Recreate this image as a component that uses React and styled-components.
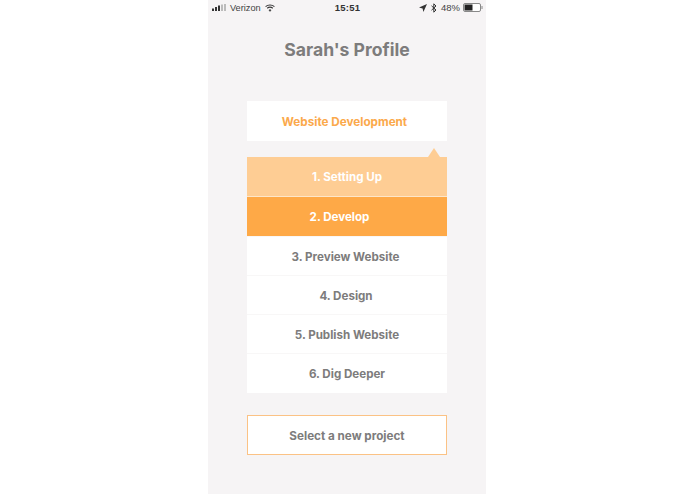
import React from 'react';
import styled, { createGlobalStyle } from 'styled-components';

const GlobalStyle = createGlobalStyle`
  html, body {
    margin: 0;
    padding: 0;
    background: #fff;
  }
  body {
    font-family: Inter, "Liberation Sans", sans-serif;
  }
`;

const Page = styled.div`
  width: 695px;
  height: 494px;
  padding-left: 208px;
  box-sizing: border-box;
  overflow: hidden;
`;

const Phone = styled.div`
  width: 278px;
  height: 494px;
  background: #f6f4f5;
  display: flex;
  flex-direction: column;
  align-items: center;
`;

const StatusBar = styled.div`
  width: 100%;
  box-sizing: border-box;
  height: 15px;
  padding: 0 3px 0 4px;
  display: grid;
  grid-template-columns: 1fr auto 1fr;
  align-items: center;
  font-family: "Liberation Sans", sans-serif;
  font-size: 9.5px;
  color: #444;
`;

const StatusLeft = styled.div`
  display: flex;
  align-items: center;
  gap: 4px;

  span {
    font-size: 9.2px;
  }
`;

const StatusRight = styled.div`
  display: flex;
  align-items: center;
  justify-content: flex-end;
  gap: 4px;

  span {
    margin-right: -1px;
  }
`;

const Clock = styled.div`
  font-weight: 700;
  font-size: 9.5px;
  letter-spacing: 0.2px;
  color: #333;
`;

const Title = styled.h1`
  margin: 25px 0 0;
  height: 20px;
  line-height: 20px;
  font-size: 17.6px;
  font-weight: 700;
  color: #7d7c7c;
`;

const ProjectCard = styled.div`
  margin-top: 41px;
  width: 200px;
  height: 40px;
  box-sizing: border-box;
  padding: 1px 5px 0 0;
  background: #fff;
  display: flex;
  align-items: center;
  justify-content: center;
  font-size: 11.7px;
  font-weight: 700;
  color: #fba94b;
`;

const Steps = styled.ul`
  position: relative;
  list-style: none;
  margin: 16px 0 0;
  padding: 0;
  width: 200px;
  background: #fff;

  &::before {
    content: '';
    position: absolute;
    top: -9px;
    right: 7px;
    border-left: 6px solid transparent;
    border-right: 6px solid transparent;
    border-bottom: 9px solid #fecd94;
  }
`;

const rowColors = {
  done: { bg: '#fecd94', line: '#fde6ca' },
  active: { bg: '#fea947', line: '#fea947' },
};

const Step = styled.li`
  box-sizing: border-box;
  height: ${(p) => (p.$state === 'done' ? 40 : 39)}px;
  padding-top: ${(p) => (p.$state === 'done' ? 1 : p.$state ? 2 : 1)}px;
  padding-right: ${(p) => p.$shift || 0}px;
  display: flex;
  align-items: center;
  justify-content: center;
  font-size: 11.6px;
  font-weight: 700;
  color: ${(p) => (p.$state ? '#fff' : '#7d7c7c')};
  background: ${(p) => (p.$state ? rowColors[p.$state].bg : '#fff')};
  border-bottom: ${(p) => (p.$state ? `1px solid ${rowColors[p.$state].line}` : '0')};
  border-top: ${(p) => (p.$state ? '0' : '1px solid #f8f7f7')};

  &:last-child {
    height: 40px;
    padding-top: 0;
  }
`;

const SelectButton = styled.button`
  margin-top: 22px;
  width: 200px;
  height: 40px;
  box-sizing: border-box;
  background: #fff;
  border: 1px solid #fbc285;
  font-family: inherit;
  font-size: 11.7px;
  font-weight: 700;
  color: #7d7c7c;
  padding: 2px 0 0;
`;

const steps = [
  { label: '1. Setting Up', state: 'done' },
  { label: '2. Develop', state: 'active', shift: 15 },
  { label: '3. Preview Website', shift: 3 },
  { label: '4. Design', shift: 2 },
  { label: '5. Publish Website' },
  { label: '6. Dig Deeper' },
];

const Signal = () => (
  <svg width="14" height="7" viewBox="0 0 14 7">
    <rect x="0" y="4.5" width="2" height="2.5" fill="#333" />
    <rect x="3" y="3" width="2" height="4" fill="#333" />
    <rect x="6" y="1.5" width="2" height="5.5" fill="#333" />
    <rect x="9" y="0.5" width="2" height="6.5" fill="#bbb" />
    <rect x="12" y="0" width="2" height="7" fill="#bbb" />
  </svg>
);

const Wifi = () => (
  <svg width="10" height="8" viewBox="0 0 10 8" fill="none" stroke="#333">
    <path d="M.6 2.6C3 .5 7 .5 9.4 2.6" strokeWidth="1.1" />
    <path d="M2.2 4.3c1.6-1.3 4-1.3 5.6 0" strokeWidth="1.1" />
    <path d="M3.9 6c.7-.5 1.5-.5 2.2 0L5 7.4z" fill="#333" strokeWidth=".5" />
  </svg>
);

const Location = () => (
  <svg width="8" height="8" viewBox="0 0 8 8">
    <path d="M8 0 0 3.6l3.6.8.8 3.6z" fill="#333" />
  </svg>
);

const Bluetooth = () => (
  <svg width="6" height="10" viewBox="0 0 6 10" fill="none" stroke="#333" strokeWidth="1">
    <path d="M.5 2.8 5 7 2.8 9.2V.8L5 3 .5 7.2" />
  </svg>
);

const Battery = () => (
  <svg width="20" height="9" viewBox="0 0 20 9">
    <rect x=".5" y=".5" width="17" height="8" rx="1.5" fill="#fff" stroke="#888" />
    <rect x="1.5" y="1.5" width="8" height="6" fill="#222" />
    <rect x="18.5" y="3" width="1" height="3" fill="#888" />
  </svg>
);

export default function App() {
  return (
    <>
      <GlobalStyle />
      <Page>
        <Phone>
          <StatusBar>
            <StatusLeft>
              <Signal />
              <span>Verizon</span>
              <Wifi />
            </StatusLeft>
            <Clock>15:51</Clock>
            <StatusRight>
              <Location />
              <Bluetooth />
              <span>48%</span>
              <Battery />
            </StatusRight>
          </StatusBar>
          <Title>Sarah's Profile</Title>
          <ProjectCard>Website Development</ProjectCard>
          <Steps>
            {steps.map(({ label, state, shift }) => (
              <Step key={label} $state={state} $shift={shift}>{label}</Step>
            ))}
          </Steps>
          <SelectButton>Select a new project</SelectButton>
        </Phone>
      </Page>
    </>
  );
}
